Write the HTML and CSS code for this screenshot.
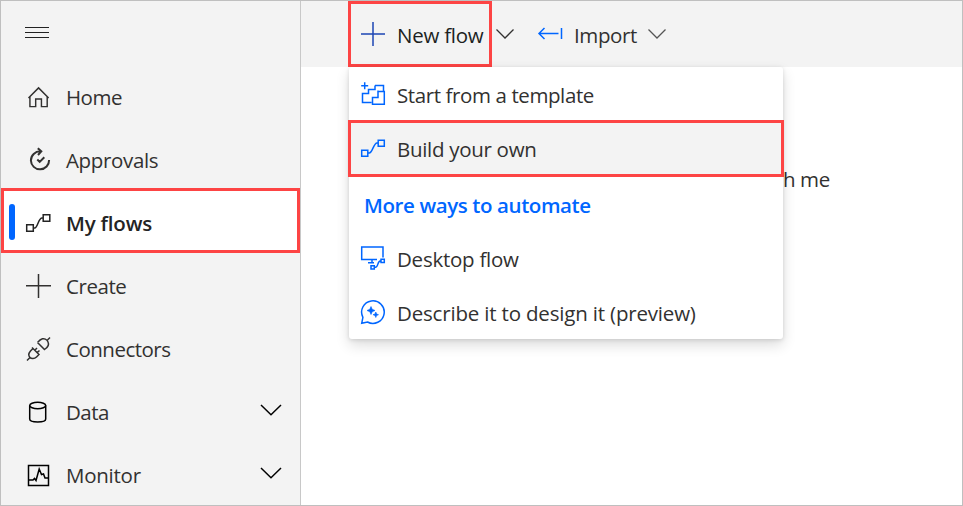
FILE: index.html
```html
<!DOCTYPE html>
<html lang="en">
<head>
<meta charset="utf-8">
<title>My flows</title>
<link rel="stylesheet" href="styles.css">
</head>
<body>
<div class="app">
  <nav class="sidebar">
    <button class="burger" aria-label="Menu"><i></i><i></i><i></i></button>
    <a class="item"><svg class="icon" viewBox="0 0 26 26"><path d="M3 13.500 13.500 3 24 13.500M4.500 12.500V22.500H10.500V14.500H16.500V22.500H22.500V12.500" transform="translate(.6 1) scale(.96)"/></svg><span class="t-home">Home</span></a>
    <a class="item"><svg class="icon heavy" viewBox="0 0 26 26"><path d="M16 4.400C10 4 5.900 8.500 5.900 13.500A9.100 9.100 0 0 0 24.100 13M12.800 1.200 16.300 4.400 13 8M12.300 12.500 14.700 14.900 19.300 10.300"/></svg><span class="t-approvals">Approvals</span></a>
    <a class="item selected"><svg class="icon" viewBox="0 0 26 26"><path d="M1.700 14.700h6.600v6.600H1.700zM18.200 4.700h6.600v6.600h-6.600zM8.300 18h1.500C12.500 18 13.500 8 17 8h1.200"/></svg><span class="t-my">My flows</span></a>
    <a class="item"><svg class="icon" viewBox="0 0 26 26"><path d="M13.500 1V25M1 12.800H26"/></svg><span class="t-create">Create</span></a>
    <a class="item"><svg class="icon" viewBox="0 0 26 26"><path d="M2 24.500 5 21.500M7 11.500 14.500 19M7.500 13 5.500 15C3 18 4 20.500 5 21.500S9 23.500 11.500 21L13.500 19M9.800 14.200 12 12M12.200 16.600 14.500 14.500M12.500 6.500 19.500 13.500C22.500 11.500 24.500 9 23 6L22 4.200C19 1.500 16 2.500 12.500 6.500M22 4.500 25 1.500"/></svg><span class="t-connectors">Connectors</span></a>
    <a class="item dark"><svg class="icon" viewBox="0 0 26 26"><ellipse cx="12.700" cy="6.500" rx="8" ry="3.200"/><path d="M4.700 6.500V20C4.700 24 20.700 24 20.700 20V6.500"/></svg><span class="t-data">Data</span><svg class="chev" viewBox="0 0 22 12"><path d="M1 1 11 10.700 21 1"/></svg></a>
    <a class="item dark"><svg class="icon" viewBox="0 0 26 26"><path d="M3.500 3.500H23.500V23.500H3.500ZM4 18H8L9.500 16.500 11 18.500 14.200 7 16.500 12.500 18.500 12 20 16H23"/></svg><span class="t-monitor">Monitor</span><svg class="chev" viewBox="0 0 22 12"><path d="M1 1 11 10.700 21 1"/></svg></a>
  </nav>
  <main class="main">
    <header class="toolbar">
      <button class="new"><svg class="icon navy" viewBox="0 0 26 26"><path d="M13 1V25M1 13H25"/></svg><span class="t-new">New flow</span></button>
      <svg class="chev-sm" viewBox="0 0 20 12"><path d="M1.500 1.500 10 10 18.500 1.500"/></svg>
      <button class="import"><svg class="icon blue" viewBox="0 0 26 26"><path d="M2 12.500H21.500M7.500 7 2 12.500 7.500 18M24.500 7V18"/></svg><span class="t-import">Import</span></button>
      <svg class="chev-sm soft" viewBox="0 0 20 12"><path d="M1.500 1.500 10 10 18.500 1.500"/></svg>
    </header>
    <div class="tabs"><span class="t-tab">h me</span></div>
    <div class="menu">
      <a class="option"><svg class="icon blue" viewBox="0 0 26 26"><path d="M4.700 1.200V8.200M1.200 4.700H8.200M18 10.500V9.500M15 4.500H23.500V10.500M15 4.500V8.500H8.500V12.500H2.500V21.500H11.500M18 10.500H24.300V23.300H12.500V16.500H18Z"/></svg><span class="t-start">Start from a template</span></a>
      <a class="option chosen"><svg class="icon blue" viewBox="0 0 26 26"><path d="M1.700 15.200h6.100v6.100H1.700zM18.200 5.200h6.100v6.100h-6.100zM7.800 18h1.500C12.500 18 13.500 8 17 8h1.200"/></svg><span class="t-build">Build your own</span></a>
      <div class="heading"><span class="t-more">More ways to automate</span></div>
      <a class="option"><svg class="icon blue" viewBox="0 0 26 26"><path d="M23 12.500V2H1.700V14.500H17M12 14.500V17.500M8 17.700H14M11 20.700h3.300V24H11zM21 14.200h3.300v3.300H21zM14.300 22.300H15.500C18.500 22.300 17 15.800 21 15.800"/></svg><span class="t-desktop">Desktop flow</span></a>
      <a class="option"><svg class="icon blue" viewBox="0 0 26 26"><path d="M1.700 24.300 2.900 18.300A11.300 11.300 0 1 1 7.500 23Z"/><path class="solid" d="M11 7.500 12.200 10.300 15 11.500 12.200 12.700 11 15.500 9.800 12.700 7 11.500 9.800 10.300ZM15.800 13 16.600 15 18.500 15.700 16.600 16.500 15.800 18.500 15 16.500 13 15.700 15 15Z"/></svg><span class="t-describe">Describe it to design it (preview)</span></a>
    </div>
  </main>
</div>
</body>
</html>
```
FILE: styles.css
```css
* { box-sizing: border-box; }
body {
  margin: 0;
  font: 20.5px/30px "Open Sans", "Noto Sans", sans-serif;
  color: #323130;
}
button { border: 0; padding: 0; background: none; font: inherit; color: inherit; }
span { white-space: nowrap; }
svg { fill: none; stroke: currentColor; flex: none; }
.solid { fill: currentColor; stroke-width: .6; }
.app {
  display: flex;
  width: 963px;
  height: 506px;
  border: 1px solid #bfbfbf;
  overflow: hidden;
  background: #fff;
}
.sidebar {
  width: 300px;
  flex: none;
  background: #f3f3f3;
  border-right: 1px solid #c8c8c8;
}
.burger {
  display: flex;
  flex-direction: column;
  gap: 4px;
  height: 62px;
  padding: 26px 0 0 24px;
}
.burger i { width: 24px; height: 1px; background: #222; }
.item { display: flex; align-items: center; height: 63px; padding: 4px 18px 0 24px; position: relative; }
.icon { width: 26px; height: 26px; stroke-width: 1.5; }
.item .icon { margin-right: 15px; }
.heavy { stroke-width: 2; }
.dark svg { color: #000; }
.chev { width: 22px; height: 12px; margin-left: auto; margin-top: -4px; stroke-width: 1.5; }
.selected { background: #fff; font-weight: 600; color: #242424; }
.selected::before {
  content: "";
  position: absolute;
  left: 8px;
  top: 15px;
  width: 6px;
  height: 36px;
  border-radius: 3px;
  background: #0066ff;
}
.selected::after, .chosen::after, .new::after {
  content: "";
  position: absolute;
  inset: -1px 0;
  border: 3px solid #fd4444;
}
.main { flex: 1; position: relative; }
.toolbar { display: flex; align-items: center; height: 66px; padding-left: 47px; background: #f3f3f3; }
.toolbar span, .option span { position: relative; top: 1px; }
.new { position: relative; display: flex; align-items: center; width: 144px; height: 66px; padding-left: 12px; color: #201f1e; }
.new::after { inset: 0; }
.new .icon, .import .icon { margin-right: 11px; margin-top: -1px; }
.navy { color: #1d46b4; }
.blue { color: #0066ff; }
.chev-sm { width: 20px; height: 12px; margin: -1px 0 0 3px; stroke-width: 1.25; }
.soft { color: #555; }
.import { display: flex; align-items: center; width: 107px; margin-left: 22px; }
.tabs { padding: 97px 0 0 482px; }
.menu {
  position: absolute;
  left: 48px;
  top: 66px;
  width: 434px;
  height: 272px;
  background: #fff;
  border-radius: 3px;
  box-shadow: 0 6px 14px rgba(0, 0, 0, .14), 0 1px 4px rgba(0, 0, 0, .12);
}
.option { display: flex; align-items: center; height: 54px; padding-left: 11px; position: relative; }
.option .icon { margin-right: 11px; }
.chosen { background: #f3f3f3; }
.chosen::after { inset: -1px -1px -2px; }
.heading { display: flex; align-items: center; height: 56px; padding: 4px 0 0 15px; font-weight: 600; color: #0066ff; }
.t-home, .t-connectors, .t-data { letter-spacing: -.5px; }
.t-approvals { letter-spacing: -.35px; }
.t-my { letter-spacing: -.2px; }
.t-create { letter-spacing: -.45px; }
.t-monitor, .t-new, .t-desktop { letter-spacing: -.25px; }
.t-import, .t-start, .t-more, .t-tab { letter-spacing: -.4px; }
.t-build { letter-spacing: -.3px; }
.t-describe { letter-spacing: -.18px; }
```
